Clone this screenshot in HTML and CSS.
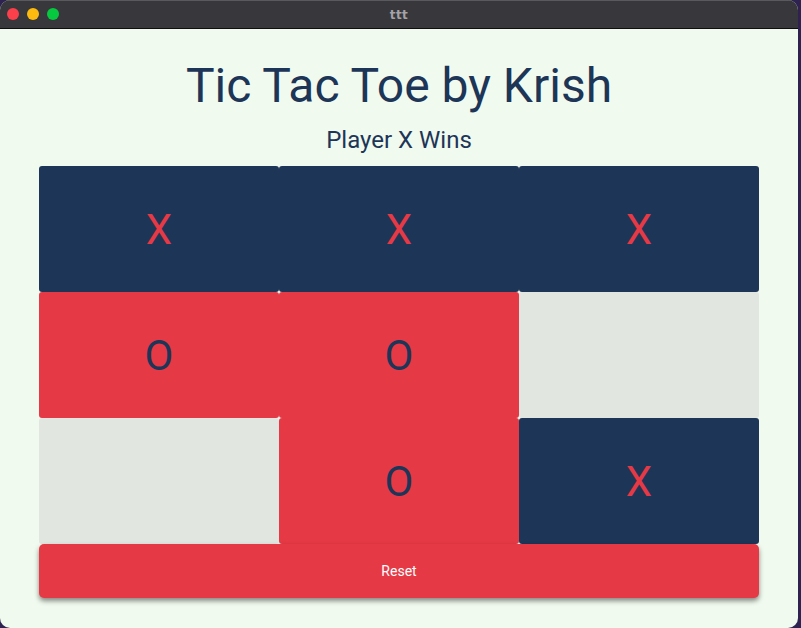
FILE: index.html
```html
<!DOCTYPE html>
<html>
<head>
<meta charset="utf-8">
<link rel="stylesheet" href="styles.css">
</head>
<body>
<div class="window">
  <div class="titlebar">
    <div class="lights">
      <span class="light red"></span>
      <span class="light yellow"></span>
      <span class="light green"></span>
    </div>
    <div class="wintitle">ttt</div>
  </div>
  <main class="app">
    <h1 class="title">Tic Tac Toe by Krish</h1>
    <div class="status">Player X Wins</div>
    <div class="board">
      <div class="cell navy">X</div>
      <div class="cell navy">X</div>
      <div class="cell navy">X</div>
      <div class="cell red">O</div>
      <div class="cell red">O</div>
      <div class="cell empty"></div>
      <div class="cell empty"></div>
      <div class="cell red">O</div>
      <div class="cell navy">X</div>
    </div>
    <button class="reset">Reset</button>
  </main>
</div>
</body>
</html>
```
FILE: styles.css
```css
html, body {
  margin: 0;
  padding: 0;
  height: 100%;
}
body {
  background: #2e2350;
  font-family: Roboto, "Liberation Sans", sans-serif;
  overflow: hidden;
}
.window {
  width: 798px;
  height: 628px;
  border-radius: 10px;
  overflow: hidden;
  background: #f1faee;
  display: flex;
  flex-direction: column;
}
.titlebar {
  background: #38373c;
  border-top: 1px solid #5a595e;
  border-bottom: 1px solid #0e0e10;
  box-sizing: border-box;
  height: 29px;
  position: relative;
  display: flex;
  align-items: center;
  justify-content: center;
}
.lights {
  position: absolute;
  left: 7px;
  top: 7px;
  display: flex;
  gap: 8px;
}
.light {
  width: 12px;
  height: 12px;
  border-radius: 50%;
  display: block;
}
.light.red { background: #fb3f4b; }
.light.yellow { background: #fdbb10; }
.light.green { background: #06c93f; }
.wintitle {
  color: #a3a3a8;
  font-family: "DejaVu Sans", sans-serif;
  font-weight: bold;
  font-size: 12px;
  letter-spacing: 0.5px;
}
.app {
  flex: 1;
  padding: 27px 39px 0;
  display: flex;
  flex-direction: column;
  color: #1d3557;
}
.title {
  margin: 0;
  font-weight: 400;
  font-size: 48px;
  line-height: 60px;
  text-align: center;
}
.status {
  margin-top: 10px;
  font-size: 24px;
  line-height: 28px;
  text-align: center;
}
.board {
  margin-top: 12px;
  display: grid;
  grid-template-columns: repeat(3, 240px);
  grid-template-rows: repeat(3, 126px);
}
.cell {
  display: flex;
  align-items: center;
  justify-content: center;
  font-size: 42px;
  border-radius: 3px;
}
.cell.navy { background: #1d3557; color: #e63946; }
.cell.red { background: #e63946; color: #1d3557; }
.cell.empty { background: #e1e6e0; }
.reset {
  height: 54px;
  border: none;
  border-radius: 5px;
  background: #e63946;
  color: #ffffff;
  font-family: Roboto, "Liberation Sans", sans-serif;
  font-size: 14px;
  box-shadow: 0 3px 5px rgba(0, 0, 0, 0.45);
  padding: 0;
}
```
